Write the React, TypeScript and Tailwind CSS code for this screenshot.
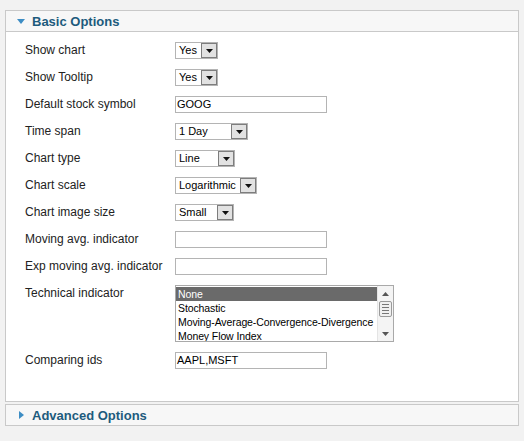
const font = { fontFamily: '"Liberation Sans", Arial, sans-serif' };

function Select({ value, width }: { value: string; width: number }) {
    return (
        <div className="flex items-center h-[17px] border border-[#b4b4b4] bg-white" style={{ width }}>
            <span className="flex-1 pl-[3px] text-[11px] leading-[15px] text-black whitespace-nowrap overflow-hidden">{value}</span>
            <span className="w-[16px] h-[15px] border border-[#7d7d7d] bg-[#e2e2e2] flex items-center justify-center">
                <svg width="7" height="4" viewBox="0 0 7 4"><path d="M0 0 H7 L3.5 4 Z" fill="#111" /></svg>
            </span>
        </div>
    );
}

function TextInput({ value = "" }: { value?: string }) {
    return (
        <div className="w-[152px] h-[17px] border border-[#b4b4b4] bg-white pl-[1px] text-[11px] leading-[15px] text-black">
            {value}
        </div>
    );
}

function ListBox() {
    const items = ["None", "Stochastic", "Moving-Average-Convergence-Divergence", "Money Flow Index"];
    return (
        <div className="flex w-[219px] h-[57px] border border-[#a9a9a9] bg-white">
            <div className="flex-1 overflow-hidden pt-[1px]">
                {items.map((it, i) => (
                    <div
                        key={it}
                        className={
                            "h-[14px] pl-[2px] text-[10.5px] leading-[14px] tracking-[-0.1px] whitespace-nowrap " +
                            (i === 0 ? "bg-[#6a6a6a] text-white" : "text-black")
                        }
                    >
                        {it}
                    </div>
                ))}
            </div>
            <div className="w-[16px] flex flex-col items-center bg-[#f4f4f4] border-l border-[#e4e4e4]">
                <div className="h-[15px] flex items-center justify-center">
                    <svg width="7" height="4" viewBox="0 0 7 4"><path d="M3.5 0 L7 4 H0 Z" fill="#555" /></svg>
                </div>
                <div className="w-[13px] h-[16px] border border-[#9a9a9a] rounded-[2px] bg-[#f0f0f0] flex flex-col items-center justify-center gap-[2px]">
                    <span className="block w-[7px] h-px bg-[#777]" />
                    <span className="block w-[7px] h-px bg-[#777]" />
                    <span className="block w-[7px] h-px bg-[#777]" />
                    <span className="block w-[7px] h-px bg-[#777]" />
                </div>
                <div className="flex-1 flex items-end justify-center pb-[5px]">
                    <svg width="7" height="4" viewBox="0 0 7 4"><path d="M0 0 H7 L3.5 4 Z" fill="#555" /></svg>
                </div>
            </div>
        </div>
    );
}

const rows: { label: string; control: React.ReactNode }[] = [
    { label: "Show chart", control: <Select value="Yes" width={43} /> },
    { label: "Show Tooltip", control: <Select value="Yes" width={43} /> },
    { label: "Default stock symbol", control: <TextInput value="GOOG" /> },
    { label: "Time span", control: <Select value="1 Day" width={73} /> },
    { label: "Chart type", control: <Select value="Line" width={60} /> },
    { label: "Chart scale", control: <Select value="Logarithmic" width={82} /> },
    { label: "Chart image size", control: <Select value="Small" width={59} /> },
    { label: "Moving avg. indicator", control: <TextInput /> },
    { label: "Exp moving avg. indicator", control: <TextInput /> },
];

function Header({ title, open }: { title: string; open: boolean }) {
    return (
        <div className="h-[20px] flex items-center pl-[11px] bg-[#f7f7f7]">
            {open ? (
                <svg width="8" height="5" viewBox="0 0 8 5" className="mr-[7px]"><path d="M0 0 H8 L4 5 Z" fill="#3d8dc4" /></svg>
            ) : (
                <svg width="5" height="8" viewBox="0 0 5 8" className="ml-[2px] mr-[8px]"><path d="M0 0 L5 4 L0 8 Z" fill="#3d8dc4" /></svg>
            )}
            <span className="text-[13px] font-bold text-[#1d5b7d] leading-none mt-[1px]">{title}</span>
        </div>
    );
}

export default function App() {
    return (
        <div className="w-[524px] h-[441px] bg-[#f2f2f2] pt-[10px] px-[5px]" style={font}>
            <div className="border border-[#c9c9c9]">
                <Header title="Basic Options" open />
                <div className="bg-white border-t border-[#c9c9c9] pt-[3px] pb-[29px] pl-[19px] text-[12px] text-[#222]">
                    {rows.map((r) => (
                        <div key={r.label} className="flex items-start h-[27px] pt-[7px]">
                            <span className="w-[150px] leading-[15px] mt-[1px]">{r.label}</span>
                            {r.control}
                        </div>
                    ))}
                    <div className="flex items-start h-[67px] pt-[7px]">
                        <span className="w-[150px] leading-[15px] mt-[1px]">Technical indicator</span>
                        <ListBox />
                    </div>
                    <div className="flex items-start h-[27px] pt-[7px]">
                        <span className="w-[150px] leading-[15px] mt-[1px]">Comparing ids</span>
                        <TextInput value="AAPL,MSFT" />
                    </div>
                </div>
            </div>
            <div className="mt-[2px] border border-[#c9c9c9]">
                <Header title="Advanced Options" open={false} />
            </div>
        </div>
    );
}
